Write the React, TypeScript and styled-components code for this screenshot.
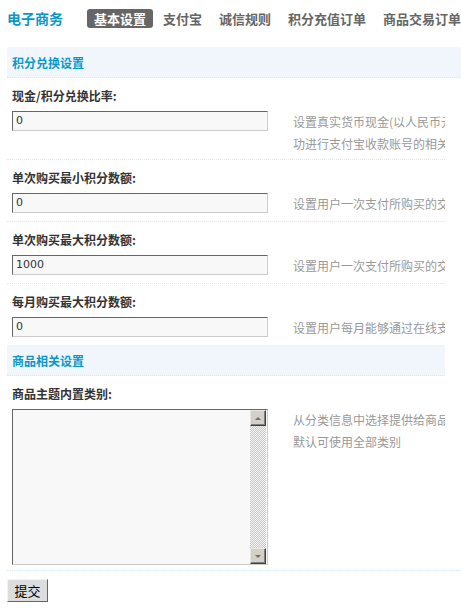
import * as React from 'react'
import styled, { createGlobalStyle, css } from 'styled-components'

const CJK = `"Noto Sans CJK SC", "Liberation Sans", sans-serif`

const COLOR = {
  BLUE: '#0a97c9',
  TEXT: '#333',
  TAB: '#666',
  TIP: '#999',
  HEAD_BG: '#f0f6fc',
  DOT: '#d8e8f5',
}

interface FieldData {
  label: string
  value: string
  tips: string[]
}

const TABS = ['基本设置', '支付宝', '诚信规则', '积分充值订单', '商品交易订单']

const FIELDS: FieldData[] = [
  {
    label: '现金/积分兑换比率:',
    value: '0',
    tips: ['设置真实货币现金(以人民币元计算)与站点积分的兑换比率', '功进行支付宝收款账号的相关设置'],
  },
  { label: '单次购买最小积分数额:', value: '0', tips: ['设置用户一次支付所购买的交易积分的最小数额'] },
  { label: '单次购买最大积分数额:', value: '1000', tips: ['设置用户一次支付所购买的交易积分的最大数额'] },
  { label: '每月购买最大积分数额:', value: '0', tips: ['设置用户每月能够通过在线支付方式购买的积分'] },
]

const GlobalStyle = createGlobalStyle`
  html, body {
    margin: 0;
    padding: 0;
    background: #fff;
    overflow: hidden;
  }
  body {
    font-family: ${CJK};
    font-size: 12px;
    color: ${COLOR.TEXT};
  }
`

const App = () => {
  return (
    <Page>
      <GlobalStyle />
      <Nav>
        <Logo>电子商务</Logo>
        {TABS.map((t, i) => (
          <Tab key={t} $active={i === 0}>
            {t}
          </Tab>
        ))}
      </Nav>
      <Form>
        <SectionHeader $full>积分兑换设置</SectionHeader>
        {FIELDS.map((f, i) => (
          <Field key={f.label} $first={i === 0}>
            <Label>{f.label}</Label>
            <FieldBody>
              <InputCell>
                <TextInput>{f.value}</TextInput>
              </InputCell>
              <Tips>
                {f.tips.map(line => (
                  <div key={line}>{line}</div>
                ))}
              </Tips>
            </FieldBody>
          </Field>
        ))}
        <SectionHeader>商品相关设置</SectionHeader>
        <Field $first>
          <Label>商品主题内置类别:</Label>
          <FieldBody>
            <InputCell $tight>
              <SelectBox>
                <SelectArea />
                <ScrollBar>
                  <ScrollButton>
                    <Arrow $dir={'up'} />
                  </ScrollButton>
                  <ScrollTrack />
                  <ScrollButton>
                    <Arrow $dir={'down'} />
                  </ScrollButton>
                </ScrollBar>
              </SelectBox>
            </InputCell>
            <Tips>
              <div>从分类信息中选择提供给商品主题使用的类别</div>
              <div>默认可使用全部类别</div>
            </Tips>
          </FieldBody>
        </Field>
        <Actions>
          <SubmitButton>提交</SubmitButton>
        </Actions>
      </Form>
    </Page>
  )
}

const Page = styled.div`
  padding-left: 7px;
  width: 454px;
`

const Nav = styled.div`
  display: flex;
  align-items: center;
  padding-top: 9px;
  height: 19px;
  white-space: nowrap;
`

const Logo = styled.div`
  width: 80px;
  flex-shrink: 0;
  font-size: 14px;
  font-weight: 700;
  line-height: 19px;
  color: ${COLOR.BLUE};
`

const Tab = styled.div<{ $active: boolean }>`
  flex-shrink: 0;
  padding: 0 7px;
  margin-right: 3px;
  height: 19px;
  line-height: 19px;
  font-size: 13px;
  font-weight: 700;
  color: ${COLOR.TAB};
  border-radius: 3px;

  ${props =>
    props.$active &&
    css`
      background-color: #666;
      color: #fff;
    `}
`

const Form = styled.div`
  margin-top: 19px;
  width: 454px;
`

const SectionHeader = styled.div<{ $full?: boolean }>`
  width: ${props => (props.$full ? 454 : 438)}px;
  height: 31px;
  line-height: 31px;
  padding-left: 5px;
  box-sizing: border-box;
  background-color: ${COLOR.HEAD_BG};
  border-bottom: 1px dotted ${COLOR.DOT};
  color: ${COLOR.BLUE};
  font-weight: 700;
`

const Field = styled.div<{ $first?: boolean }>`
  width: 438px;
  overflow: hidden;
  padding-top: 10px;
  border-top: 1px dotted ${props => (props.$first ? 'transparent' : COLOR.DOT)};
  ${props =>
    props.$first &&
    css`
      border-top: none;
    `}
`

const Label = styled.div`
  padding-left: 5px;
  line-height: 15px;
  font-weight: 700;
  color: ${COLOR.TEXT};
`

const FieldBody = styled.div`
  display: flex;
  align-items: flex-start;
  padding-top: 8px;
`

const InputCell = styled.div<{ $tight?: boolean }>`
  width: 281px;
  flex-shrink: 0;
  box-sizing: border-box;
  padding-left: 5px;
  padding-bottom: ${props => (props.$tight ? 5 : 8)}px;
`

const sunkenBorder = css`
  box-sizing: border-box;
  border: 1px solid;
  border-color: #666 #ccc #ccc #666;
  background-color: #f8f8f8;
`

const TextInput = styled.div`
  ${sunkenBorder}
  width: 256px;
  height: 20px;
  padding-left: 3px;
  line-height: 18px;
  font-family: 'DejaVu Sans', Verdana, sans-serif;
  font-size: 11px;
  color: #333;
`

const SelectBox = styled.div`
  ${sunkenBorder}
  display: flex;
  width: 256px;
  height: 156px;
  padding-right: 1px;
`

const SelectArea = styled.div`
  flex: 1;
`

const ScrollBar = styled.div`
  display: flex;
  flex-direction: column;
  width: 16px;
`

const ScrollButton = styled.div`
  display: flex;
  align-items: center;
  justify-content: center;
  box-sizing: border-box;
  height: 16px;
  background-color: #d4d0c8;
  border: 1px solid;
  border-color: #e8e6e1 #404040 #404040 #e8e6e1;
  box-shadow: inset -1px -1px 0 #808080;
`

const Arrow = styled.span<{ $dir: 'up' | 'down' }>`
  width: 0;
  height: 0;
  border-left: 3px solid transparent;
  border-right: 3px solid transparent;
  ${props =>
    props.$dir === 'up'
      ? css`
          border-bottom: 3px solid #6e6e6e;
        `
      : css`
          border-top: 3px solid #6e6e6e;
        `}
`

const ScrollTrack = styled.div`
  flex: 1;
  background: repeating-conic-gradient(#c8c8c8 0 25%, #f4f4f4 0 50%) 0 0 / 2px 2px;
`

const Tips = styled.div`
  padding-left: 5px;
  padding-bottom: 4px;
  line-height: 22px;
  white-space: nowrap;
  color: ${COLOR.TIP};
`

const Actions = styled.div`
  width: 454px;
  padding-top: 8px;
  border-top: 1px dotted ${COLOR.DOT};
`

const SubmitButton = styled.button`
  width: 41px;
  height: 23px;
  padding: 0;
  font-family: ${CJK};
  font-size: 13px;
  color: #000;
  background-color: #ddd;
  border: 1px solid;
  border-color: #f4f4f4 #666 #666 #f4f4f4;
`

export default App
